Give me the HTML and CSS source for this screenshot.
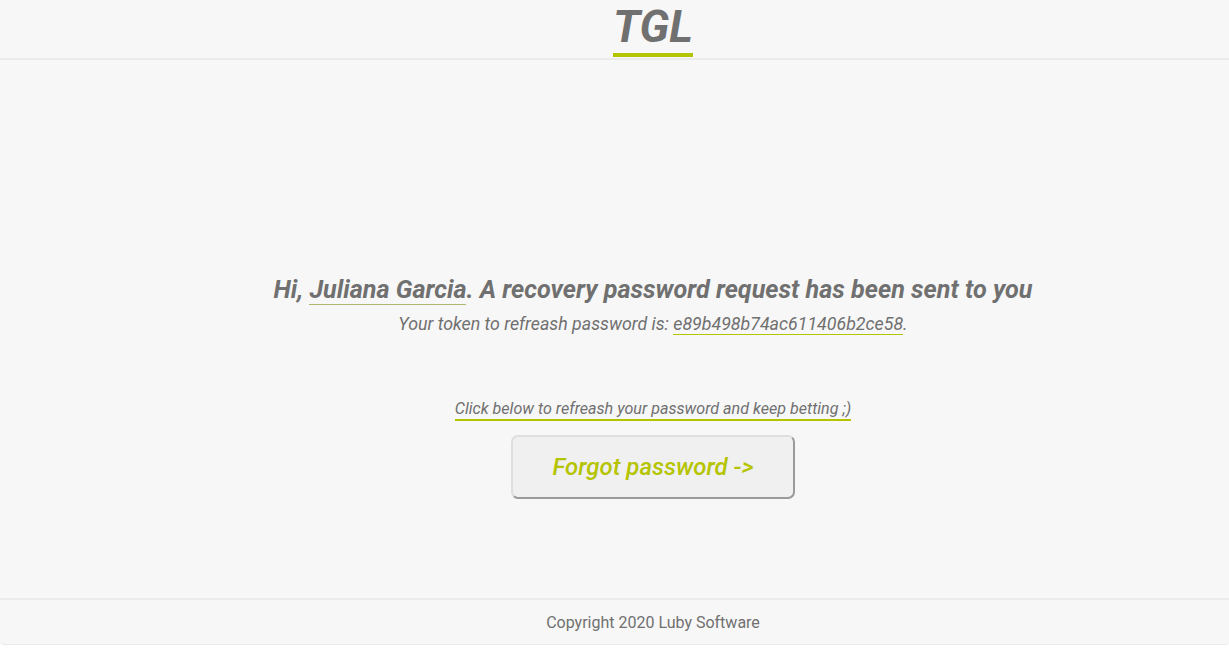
FILE: index.html
```html
<!DOCTYPE html>
<html lang="en">
<head>
<meta charset="utf-8">
<title>TGL</title>
<link rel="stylesheet" href="styles.css">
</head>
<body>
<div class="page">
  <header class="header">
    <div class="logo">TGL</div>
  </header>
  <main class="main">
    <h2 class="title">Hi, <span class="name">Juliana Garcia</span>. A recovery password request has been sent to you</h2>
    <p class="token">Your token to refreash password is: <span class="token-value">e89b498b74ac611406b2ce58</span>.</p>
    <p class="hint">Click below to refreash your password and keep betting ;)</p>
    <button class="btn" type="button">Forgot password -&gt;</button>
  </main>
  <footer class="footer">Copyright 2020 Luby Software</footer>
</div>
</body>
</html>
```

FILE: styles.css
```css
html, body {
  margin: 0;
  padding: 0;
  background: #ffffff;
}
body {
  font-family: Roboto, "Liberation Sans", sans-serif;
  color: #707070;
}
.page {
  height: 644px;
  background: #f7f7f7;
  border-bottom: 1px solid #ebebeb;
  border-radius: 0 0 4px 4px;
  display: flex;
  flex-direction: column;
}
.header,
.main,
.footer {
  padding-left: 77px;
}
.header {
  height: 58px;
  border-bottom: 2px solid #ebebeb;
  display: flex;
  justify-content: center;
}
.logo {
  font-size: 45px;
  font-weight: 700;
  font-style: italic;
  line-height: 54px;
  height: 53px;
  border-bottom: 4px solid #b5c401;
  width: 80px;
  text-align: center;
}
.main {
  flex: 1;
  display: flex;
  flex-direction: column;
  align-items: center;
  padding-top: 214px;
}
.title {
  margin: 0;
  font-size: 25.2px;
  font-weight: 700;
  font-style: italic;
  line-height: 32px;
}
.name {
  border-bottom: 1px solid #b0b66a;
}
.token {
  margin: 6px 0 0;
  font-size: 17.8px;
  font-style: italic;
  line-height: 24px;
}
.token-value {
  border-bottom: 1px solid #b5c401;
}
.hint {
  margin: 63px 0 0;
  font-size: 16.1px;
  font-style: italic;
  line-height: 20px;
  border-bottom: 2px solid #b5c401;
}
.btn {
  margin-top: 14px;
  width: 284px;
  height: 64px;
  background: #f0f0f0;
  border: 2px solid #dedede;
  border-right-color: #9a9a9a;
  border-bottom-color: #9a9a9a;
  border-radius: 7px;
  font-family: Roboto, "Liberation Sans", sans-serif;
  font-size: 24px;
  font-style: italic;
  font-weight: 500;
  color: #b5c401;
  padding: 0;
}
.footer {
  height: 44px;
  border-top: 2px solid #ebebeb;
  display: flex;
  align-items: center;
  justify-content: center;
  font-size: 16px;
}
```
